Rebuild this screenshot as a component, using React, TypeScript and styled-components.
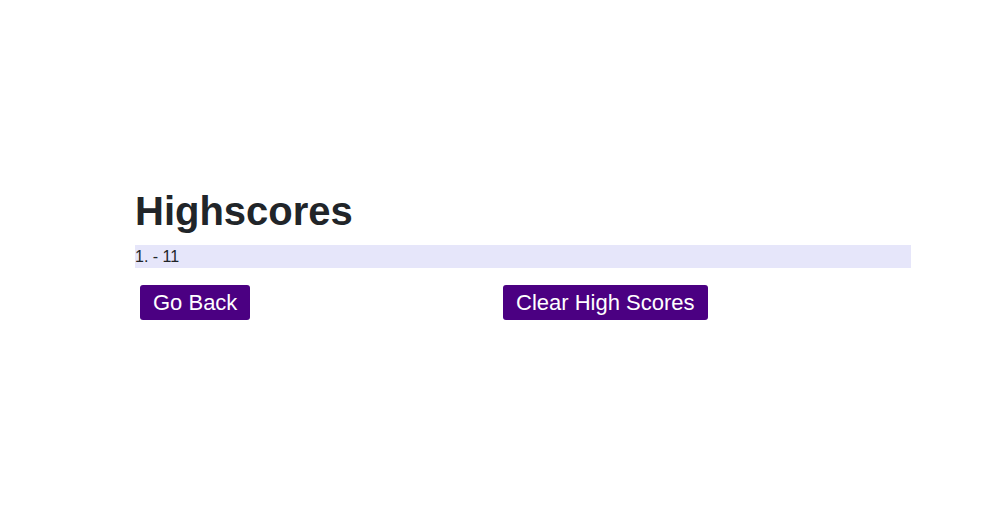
import React from "react";
import styled, { createGlobalStyle } from "styled-components";

const Global = createGlobalStyle`
  html, body { margin: 0; padding: 0; background: #fff; }
  body { font-family: "Liberation Sans", Arial, sans-serif; color: #212529; }
`;

const Page = styled.main`
  padding: 187px 84px 0 135px;
  width: 776px;
`;

const Title = styled.h1`
  margin: 0 0 10px;
  font-size: 40px;
  line-height: 48px;
  font-weight: 700;
  color: #212529;
`;

const List = styled.ol`
  list-style: none;
  margin: 0;
  padding: 0;
`;

const Item = styled.li`
  background: #e6e6fa;
  font-size: 16px;
  line-height: 23px;
  height: 23px;
  color: #212529;
`;

const Actions = styled.div`
  display: grid;
  grid-template-columns: 368px auto;
  margin-top: 17px;
  justify-items: start;
`;

const Button = styled.button<{ $offset?: number }>`
  margin-left: ${(p) => p.$offset ?? 0}px;
  background: #4b0082;
  color: #fff;
  border: none;
  border-radius: 3px;
  font-family: "Liberation Sans", Arial, sans-serif;
  font-size: 22px;
  line-height: 26px;
  padding: 5px 13px 4px;
  cursor: pointer;
`;

export default function App() {
  return (
    <>
      <Global />
      <Page>
        <Title>Highscores</Title>
        <List>
          <Item>1. - 11</Item>
        </List>
        <Actions>
          <Button $offset={5}>Go Back</Button>
          <Button>Clear High Scores</Button>
        </Actions>
      </Page>
    </>
  );
}
